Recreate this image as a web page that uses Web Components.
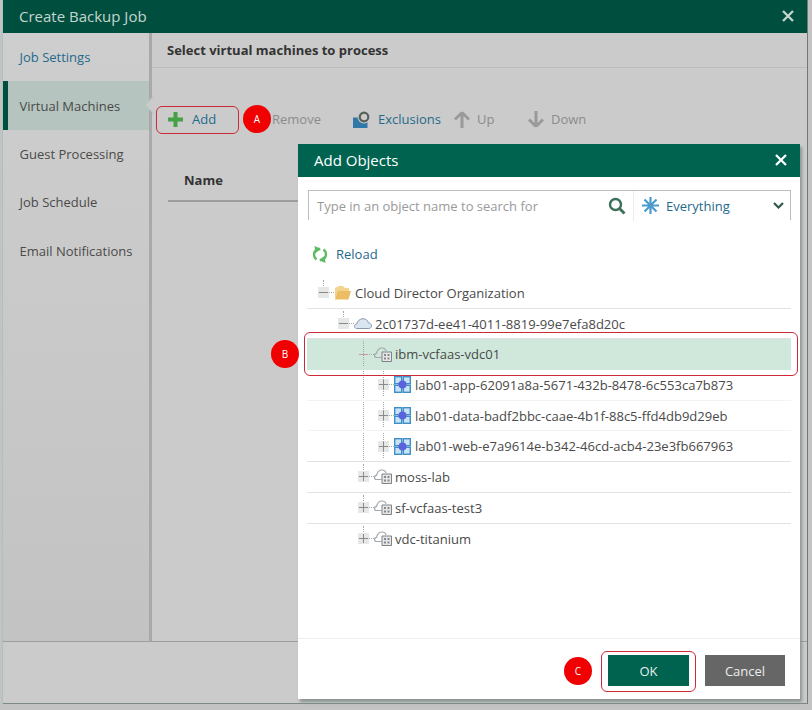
<!DOCTYPE html>
<html>
<head>
<meta charset="utf-8">
<title>Create Backup Job</title>
<style>
  html, body { margin: 0; height: 100%; }
  body { background: #c3c3c3; font-family: "Open Sans", "Liberation Sans", sans-serif; overflow: hidden; }
</style>
</head>
<body>
<backup-window>
  <nav-step slot="nav" link>Job Settings</nav-step>
  <nav-step slot="nav" active>Virtual Machines</nav-step>
  <nav-step slot="nav">Guest Processing</nav-step>
  <nav-step slot="nav">Job Schedule</nav-step>
  <nav-step slot="nav">Email Notifications</nav-step>

  <tool-btn slot="tools" icon="plus" link style="width:80px;padding-left:13px;gap:9px">Add</tool-btn>
  <tool-btn slot="tools" style="width:118px;padding-left:37px">Remove</tool-btn>
  <tool-btn slot="tools" icon="exclusions" link style="width:100px;gap:7px">Exclusions</tool-btn>
  <tool-btn slot="tools" icon="up" style="width:74px">Up</tool-btn>
  <tool-btn slot="tools" icon="down">Down</tool-btn>
</backup-window>

<add-objects>
  <tree-row level="0" icon="folder" open>Cloud Director Organization</tree-row>
  <tree-row level="1" icon="cloud" open>2c01737d-ee41-4011-8819-99e7efa8d20c</tree-row>
  <tree-row level="2" icon="vdc" open selected stem>ibm-vcfaas-vdc01</tree-row>
  <tree-row level="3" icon="vapp" faint stem guide>lab01-app-62091a8a-5671-432b-8478-6c553ca7b873</tree-row>
  <tree-row level="3" icon="vapp" faint stem guide>lab01-data-badf2bbc-caae-4b1f-88c5-ffd4db9d29eb</tree-row>
  <tree-row level="3" icon="vapp" stem guide>lab01-web-e7a9614e-b342-46cd-acb4-23e3fb667963</tree-row>
  <tree-row level="2" icon="vdc">moss-lab</tree-row>
  <tree-row level="2" icon="vdc">sf-vcfaas-test3</tree-row>
  <tree-row level="2" icon="vdc" last>vdc-titanium</tree-row>
</add-objects>

<call-out label="A" x="243" y="105" ring="155.500,106,83.500,27.500"></call-out>
<call-out label="B" x="271" y="340" ring="304,332,494,44"></call-out>
<call-out label="C" x="564" y="657" ring="601,651,95,41"></call-out>

<script>
// iconos compartidos, dibujados a mano como svg
const ICONOS = {
  plus: '<svg width="15" height="15" viewBox="0 0 15 15"><path d="M5.500 0h4v5.500H15v4H9.500V15h-4V9.500H0v-4h5.500z" fill="#46a046"/></svg>',
  exclusions: '<svg width="18" height="17" viewBox="0 0 18 17"><path d="M0 6.500h8.500l6 4V17H0z" fill="#2f78a8"/><circle cx="11" cy="6" r="6.500" fill="#cbcbcb"/><circle cx="11" cy="6" r="4.300" fill="none" stroke="#55605c" stroke-width="2.200"/></svg>',
  up: '<svg width="18" height="17" viewBox="0 0 18 17"><path d="M9 1.500 2 8.500M9 1.500l7 7M9 2v15" fill="none" stroke="#9a9a9a" stroke-width="3"/></svg>',
  down: '<svg width="18" height="17" viewBox="0 0 18 17"><path d="M9 15.500 2 8.500M9 15.500l7-7M9 15V0" fill="none" stroke="#9a9a9a" stroke-width="3"/></svg>',
  folder: '<svg width="17" height="15" viewBox="0 0 17 15"><path d="M1 14 1 3l4-2h4l2 2h4v3H5z" fill="#f3d48f"/><path d="M1 14.500 4 6h13l-2.500 8.500z" fill="#ecbd63"/></svg>',
  cloud: '<svg width="18" height="11" viewBox="0 0 18 11"><path d="M4 10.500H2.500C1 10.500.5 9 .5 8.200c0-1.300 1-2.200 2.300-2.300C3.300 3.300 5.700.7 9 .7c2.700 0 4.700 1.700 5.300 4 1.700.2 3.200 1.500 3.200 3.100 0 1.600-1.300 2.700-2.700 2.700z" fill="#d9e6f2" stroke="#8a99a8"/></svg>',
  vdc: '<svg width="18" height="15" viewBox="0 0 18 15"><path d="M7.500 10.500H2.500C1 10.500.5 9.500.5 8.500c0-1.200 1-2 2-2.100C3.200 3.500 5.200 1 8 1c2 0 3.500 1.200 4.200 2.800" fill="none" stroke="#a4a8ac" stroke-width="1.200"/><path d="M8 5h9.500v9.500H8z" fill="#e6e6e6" stroke="#7d8388"/><path d="M10 7h2v2h-2zM13.500 7h2v2h-2zM10 10.500h2v2h-2zM13.500 10.500h2v2h-2z" fill="#858a8f"/></svg>',
  vapp: '<svg width="17" height="17" viewBox="0 0 17 17"><rect x=".7" y=".7" width="7" height="7" fill="#c9e3f6" stroke="#3f8fc6" stroke-width="1.400"/><rect x="9.300" y=".7" width="7" height="7" fill="#c9e3f6" stroke="#3f8fc6" stroke-width="1.400"/><rect x=".7" y="9.300" width="7" height="7" fill="#c9e3f6" stroke="#3f8fc6" stroke-width="1.400"/><rect x="9.300" y="9.300" width="7" height="7" fill="#c9e3f6" stroke="#3f8fc6" stroke-width="1.400"/><circle cx="8.500" cy="8.500" r="4" fill="#5a62dc"/></svg>',
  reload: '<svg width="16" height="17" viewBox="0 0 16 17"><path d="M4.500 13.500A6 6 0 0 1 6 3h2" fill="none" stroke="#5dbb62" stroke-width="2.400"/><path d="M2.500 0l1 7L9 3z" fill="#5dbb62"/><path d="M11.500 3.500A6 6 0 0 1 10 14H8" fill="none" stroke="#5dbb62" stroke-width="2.400"/><path d="M13.500 17l-1-7L7 14z" fill="#5dbb62"/></svg>',
  search: '<svg width="18" height="18" viewBox="0 0 18 18"><circle cx="7.500" cy="7.500" r="5.500" fill="none" stroke="#3c7058" stroke-width="2.400"/><path d="m11.500 11.500 5 5" stroke="#3c7058" stroke-width="2.800"/></svg>',
  star: '<svg width="17" height="17" viewBox="0 0 17 17"><path d="M8.500 0v17M0 8.500h17M2.500 2.500l12 12M14.500 2.500l-12 12" stroke="#4b9ad0" stroke-width="2.200"/></svg>',
  chevron: '<svg width="11" height="7" viewBox="0 0 11 7"><path d="M1 1l4.500 4.500L10 1" fill="none" stroke="#2f5a4c" stroke-width="2.200"/></svg>',
  close: '<svg width="12" height="12" viewBox="0 0 12 12"><path d="M1 1l10 10M11 1 1 11" stroke="#fff" stroke-width="2.300"/></svg>'
};

// Ventana de fondo: el asistente con su barra lateral, atenuado por el modal
class BackupWindow extends HTMLElement {
  constructor() {
    super();
    this.attachShadow({ mode: 'open' });
    this.shadowRoot.innerHTML = `
    <style>
      :host { display: flex; flex-direction: column; width: 805px; height: 704px; margin-left: 3px; box-sizing: border-box;
        background: #cbcbcb; border-bottom: 1px solid #7c8a85; border-right: 1px solid #6f7a76; box-shadow: -1px 0 0 #a9c4bd; }
      header { flex: none; height: 33px; background: #004f3e; color: #c4d5cf; font-size: 15px; display: flex; align-items: center; justify-content: space-between; padding: 0 13px 2px 16px; box-sizing: border-box; }
      .cuerpo { flex: none; height: 608px; display: flex; border-bottom: 1px solid #9e9e9e; }
      nav { flex: none; width: 146px; background: linear-gradient(#cecece, #c3c3c3); border-right: 3px solid #a9a9a9; }
      main { flex: 1; min-width: 0; }
      h2 { margin: 0; height: 34px; line-height: 34px; padding-left: 15px; font-size: 13px; font-weight: 700; color: #333; border-bottom: 1px solid #bdbdbd; }
      .tools { display: flex; align-items: center; height: 28px; margin: 37px 0 0 3px; }
      .name { margin: 28px 0 0 16px; width: 200px; height: 41px; box-sizing: border-box; border-bottom: 2px solid #9d9d9d; padding: 10px 0 0 16px; font-size: 13px; font-weight: 700; color: #333; }
    </style>
    <header><span>Create Backup Job</span>${ICONOS.close.replace('#fff', '#c4d5cf')}</header>
    <div class="cuerpo">
      <nav><slot name="nav"></slot></nav>
      <main>
        <h2>Select virtual machines to process</h2>
        <div class="tools"><slot name="tools"></slot></div>
        <div class="name">Name</div>
      </main>
    </div>`;
  }
}

// Paso de la barra lateral
class NavStep extends HTMLElement {
  constructor() {
    super();
    this.attachShadow({ mode: 'open' });
    this.shadowRoot.innerHTML = `
    <style>
      :host { display: flex; align-items: center; position: relative; height: 48.400px; box-sizing: border-box; padding-left: 16.500px; font-size: 13px; color: #4a4a4a; }
      :host([link]) { color: #1f6a8c; }
      :host([active]) { background: #b5c4be; border-left: 5px solid #004f3e; padding-left: 11.500px; }
      .flecha { display: none; position: absolute; right: -10px; top: 18px; width: 11px; height: 11px; background: #cbcbcb; border-left: 1px solid #b5c4be; border-bottom: 1px solid #b5c4be; transform: rotate(45deg); }
      :host([active]) .flecha { display: block; }
    </style>
    <slot></slot><span class="flecha"></span>`;
  }
}

// Botón de la barra de herramientas
class ToolBtn extends HTMLElement {
  constructor() {
    super();
    this.attachShadow({ mode: 'open' });
    const icono = ICONOS[this.getAttribute('icon')] || '';
    this.shadowRoot.innerHTML = `
    <style>
      :host { display: flex; align-items: center; gap: 6px; flex: none; box-sizing: border-box; font-size: 13px; color: #8b8b8b; }
      :host([link]) { color: #1f6a8c; }
      svg { display: block; flex: none; }
    </style>
    ${icono}<slot></slot>`;
  }
}

// Fila del árbol de objetos
class TreeRow extends HTMLElement {
  constructor() {
    super();
    this.attachShadow({ mode: 'open' });
    const nivel = Number(this.getAttribute('level')) || 0;
    const abierto = this.hasAttribute('open');
    this.shadowRoot.innerHTML = `
    <style>
      :host { display: flex; align-items: center; height: 30.700px; box-sizing: border-box; padding-left: ${11 + nivel * 20}px; border-bottom: 1px solid #e2e2e2; font-size: 13.040px; color: #4a4a4a; }
      :host([faint]) { border-bottom-color: #f3f3f3; }
      :host([last]) { border-bottom: 0; }
      :host([selected]) { background: #cfe8db; border-bottom-color: #cfe8db; }
      .exp { position: relative; flex: none; width: 11px; height: 11px; background: #e6e8e8; margin-right: 5px; }
      :host([selected]) .exp { background: transparent; }
      .exp::before { content: ""; position: absolute; left: 1px; right: 1px; top: 5px; height: 1px; background: #8a8a8a; }
      :host([selected]) .exp::before { background: #c49aa8; }
      .exp.mas::after { content: ""; position: absolute; top: 1px; bottom: 1px; left: 5px; width: 1px; background: #8a8a8a; }
      .exp i { position: absolute; left: 5px; top: -7px; height: 6px; border-left: 1px dotted #a5a5a5; }
      .exp s { position: absolute; left: 11px; top: 5px; width: 5px; border-top: 1px dotted #a5a5a5; }
      :host([stem]) .exp i { height: 25px; top: -8px; }
      .exp u { display: none; position: absolute; left: -15px; top: -8px; height: 27px; border-left: 1px dotted #a5a5a5; }
      :host([guide]) .exp u { display: block; }
      .ico { flex: none; width: 21px; display: flex; align-items: center; }
      svg { display: block; }
      .txt { white-space: nowrap; }
    </style>
    <span class="exp ${abierto ? '' : 'mas'}"><i></i><s></s><u></u></span>
    <span class="ico">${ICONOS[this.getAttribute('icon')] || ''}</span>
    <span class="txt"><slot></slot></span>`;
  }
}

// Diálogo modal que queda encima de la ventana
class AddObjects extends HTMLElement {
  constructor() {
    super();
    this.attachShadow({ mode: 'open' });
    this.shadowRoot.innerHTML = `
    <style>
      :host { position: absolute; left: 298px; top: 144px; width: 502px; height: 555px; display: flex; flex-direction: column; box-sizing: border-box;
        background: #fff; box-shadow: 2px 3px 3px #8a9490; }
      header { flex: none; height: 33px; background: #006350; color: #fff; font-size: 15px; display: flex; align-items: center; justify-content: space-between; padding: 0 13px 2px 16px; box-sizing: border-box; }
      .buscar { flex: none; display: flex; align-items: center; height: 30px; margin: 13px 9px 0 10px; border: solid #bdbdbd; border-width: 1px 1px 0 1px; box-sizing: border-box; padding: 0 6px 0 8px; font-size: 13px; color: #9a9a9a; }
      .buscar .ph { flex: 1; }
      .filtro { display: flex; align-items: center; gap: 7px; width: 151px; height: 30px; margin-left: 7px; padding-left: 8px; border-left: 1px solid #ececec; box-sizing: border-box; color: #1f6a8c; }
      .filtro b { flex: 1; font-weight: 400; }
      .reload { flex: none; display: flex; align-items: center; gap: 8px; height: 24px; margin: 22px 0 0 14px; font-size: 13px; color: #1f6a8c; }
      .arbol { flex: 1; margin: 12px 9px 0 9px; }
      footer { flex: none; height: 61px; border-top: 1px solid #eee; display: flex; justify-content: flex-end; gap: 16px; padding: 16px 15px 0 0; box-sizing: border-box; }
      .btn { width: 80px; height: 31px; display: flex; align-items: center; justify-content: center; font-size: 13px; color: #e8efec; }
      .ok { background: #006350; width: 81px; }
      .cancel { background: #666; }
      svg { display: block; flex: none; }
    </style>
    <header><span>Add Objects</span>${ICONOS.close}</header>
    <div class="buscar">
      <span class="ph">Type in an object name to search for</span>
      ${ICONOS.search}
      <div class="filtro">${ICONOS.star}<b>Everything</b>${ICONOS.chevron}</div>
    </div>
    <div class="reload">${ICONOS.reload}Reload</div>
    <div class="arbol"><slot></slot></div>
    <footer><div class="btn ok">OK</div><div class="btn cancel">Cancel</div></footer>`;
  }
}

// Anotación roja del manual: círculo con letra y recuadro
class CallOut extends HTMLElement {
  constructor() {
    super();
    this.attachShadow({ mode: 'open' });
    const [rx, ry, rw, rh] = this.getAttribute('ring').split(',');
    this.shadowRoot.innerHTML = `
    <style>
      :host { display: contents; }
      .badge { position: absolute; left: ${this.getAttribute('x')}px; top: ${this.getAttribute('y')}px; width: 28px; height: 28px; border-radius: 50%; background: #f00000;
        color: #fff; font: 10px/28px "Open Sans", sans-serif; text-align: center; }
      .ring { position: absolute; left: ${rx}px; top: ${ry}px; width: ${rw}px; height: ${rh}px; box-sizing: border-box; border: 1.500px solid #cc2a38; border-radius: 6px; }
    </style>
    <div class="ring"></div><div class="badge">${this.getAttribute('label')}</div>`;
  }
}

customElements.define('backup-window', BackupWindow);
customElements.define('nav-step', NavStep);
customElements.define('tool-btn', ToolBtn);
customElements.define('tree-row', TreeRow);
customElements.define('add-objects', AddObjects);
customElements.define('call-out', CallOut);
</script>
</body>
</html>
